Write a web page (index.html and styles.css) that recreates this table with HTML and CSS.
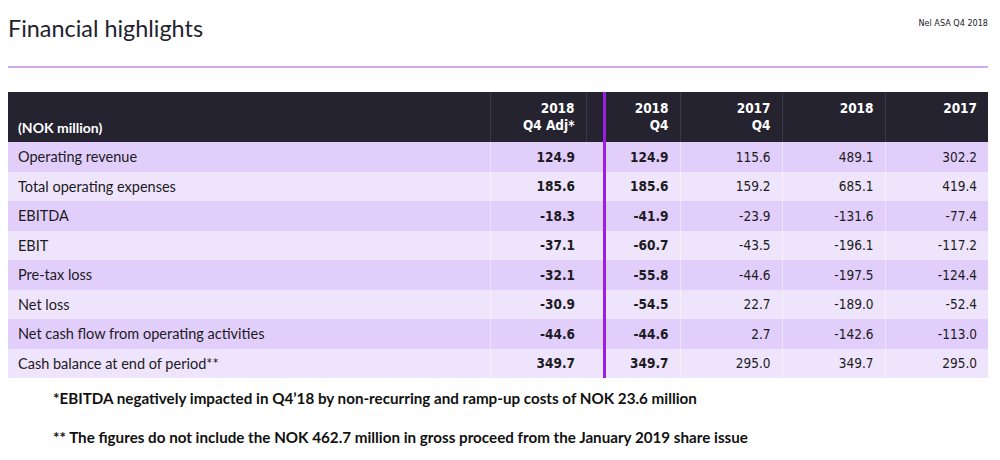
FILE: index.html
```html
<!DOCTYPE html>
<html>
<head>
<meta charset="utf-8">
<link rel="stylesheet" href="styles.css">
</head>
<body>
<div class="page">
  <header class="top">
    <h1 class="title">Financial highlights</h1>
    <div class="tag">Nel ASA Q4 2018</div>
  </header>
  <div class="rule"></div>
  <table class="fin">
    <colgroup>
      <col class="c-label"><col class="c-adj"><col class="c-gap"><col class="c-q4"><col class="c-q4b"><col class="c-y"><col class="c-y">
    </colgroup>
    <thead>
      <tr>
        <th class="label">(NOK million)</th>
        <th class="num">2018<br>Q4 Adj*</th>
        <th class="gap"></th>
        <th class="num mark">2018<br>Q4</th>
        <th class="num">2017<br>Q4</th>
        <th class="num">2018<br>&nbsp;</th>
        <th class="num">2017<br>&nbsp;</th>
      </tr>
    </thead>
    <tbody>
      <tr><td class="label">Operating revenue</td><td class="num b">124.9</td><td class="gap"></td><td class="num b mark">124.9</td><td class="num">115.6</td><td class="num">489.1</td><td class="num">302.2</td></tr>
      <tr><td class="label">Total operating expenses</td><td class="num b">185.6</td><td class="gap"></td><td class="num b mark">185.6</td><td class="num">159.2</td><td class="num">685.1</td><td class="num">419.4</td></tr>
      <tr><td class="label">EBITDA</td><td class="num b">-18.3</td><td class="gap"></td><td class="num b mark">-41.9</td><td class="num">-23.9</td><td class="num">-131.6</td><td class="num">-77.4</td></tr>
      <tr><td class="label">EBIT</td><td class="num b">-37.1</td><td class="gap"></td><td class="num b mark">-60.7</td><td class="num">-43.5</td><td class="num">-196.1</td><td class="num">-117.2</td></tr>
      <tr><td class="label">Pre-tax loss</td><td class="num b">-32.1</td><td class="gap"></td><td class="num b mark">-55.8</td><td class="num">-44.6</td><td class="num">-197.5</td><td class="num">-124.4</td></tr>
      <tr><td class="label">Net loss</td><td class="num b">-30.9</td><td class="gap"></td><td class="num b mark">-54.5</td><td class="num">22.7</td><td class="num">-189.0</td><td class="num">-52.4</td></tr>
      <tr><td class="label">Net cash flow from operating activities</td><td class="num b">-44.6</td><td class="gap"></td><td class="num b mark">-44.6</td><td class="num">2.7</td><td class="num">-142.6</td><td class="num">-113.0</td></tr>
      <tr><td class="label">Cash balance at end of period**</td><td class="num b">349.7</td><td class="gap"></td><td class="num b mark">349.7</td><td class="num">295.0</td><td class="num">349.7</td><td class="num">295.0</td></tr>
    </tbody>
  </table>
  <div class="notes">
    <p>*EBITDA negatively impacted in Q4’18 by non-recurring and ramp-up costs of NOK 23.6 million</p>
    <p>** The figures do not include the NOK 462.7 million in gross proceed from the January 2019 share issue</p>
  </div>
</div>
</body>
</html>
```
FILE: styles.css
```css
html, body {
  margin: 0;
  padding: 0;
  background: #ffffff;
}
.page {
  width: 980px;
  margin-left: 8px;
  color: #1c1b22;
}
.top {
  display: flex;
  justify-content: space-between;
  align-items: flex-start;
  height: 66px;
}
.title {
  margin: 14px 0 0 0;
  font-family: "Lato", "Liberation Sans", sans-serif;
  font-weight: 400;
  font-size: 23.4px;
  line-height: 28px;
  color: #23222e;
}
.tag {
  margin-top: 18px;
  font-family: "DejaVu Sans Condensed", "DejaVu Sans", sans-serif;
  font-size: 9px;
  line-height: 11px;
  color: #222;
}
.rule {
  height: 2px;
  background: #cfa8ee;
}
.fin {
  margin-top: 24px;
  width: 980px;
  border-collapse: collapse;
  table-layout: fixed;
}
.c-label { width: 482px; }
.c-adj { width: 96px; }
.c-gap { width: 18px; }
.c-q4 { width: 76px; }
.c-q4b { width: 102px; }
.c-y { width: 103px; }
.fin th {
  background: #24232f;
  color: #ffffff;
  height: 42px;
  padding: 0;
  vertical-align: top;
  border-left: 1px solid #3b3a47;
}
.fin th:first-child { border-left: none; }
.fin th.num {
  font-family: "DejaVu Sans Condensed", "DejaVu Sans", sans-serif;
  font-weight: 700;
  font-size: 13.5px;
  line-height: 17px;
  text-align: right;
  padding: 8px 11px 0 0;
}
.fin th.label {
  font-family: "Lato", "Liberation Sans", sans-serif;
  font-weight: 700;
  font-size: 14px;
  text-align: left;
  vertical-align: bottom;
  padding: 0 0 6px 10px;
}
.fin td {
  height: 29.5px;
  padding: 0;
  border-left: 1px solid rgba(255,255,255,0.45);
}
.fin td:first-child { border-left: none; }
.fin tbody tr:nth-child(odd) td { background: #e1cefb; }
.fin tbody tr:nth-child(even) td { background: #eee4fc; }
.fin td.label {
  font-family: "Lato", "Liberation Sans", sans-serif;
  font-size: 14.5px;
  padding-left: 10px;
  color: #1c1b22;
}
.fin td.num {
  font-family: "DejaVu Sans Condensed", "DejaVu Sans", sans-serif;
  font-size: 13.5px;
  text-align: right;
  padding-right: 11px;
  color: #1c1b22;
}
.fin td.b { font-weight: 700; }
.fin td.gap { border-left: none; }
.fin th.gap { border-left: 1px solid #3b3a47; }
.fin .mark { border-left: 3px solid #9a1ee6 !important; }
.notes {
  padding-left: 45px;
  font-family: "Lato", "Liberation Sans", sans-serif;
  font-weight: 700;
  font-size: 15.2px;
  color: #111;
}
.notes p {
  margin: 0;
  line-height: 20px;
}
.notes p:first-child { margin-top: 10px; }
.notes p + p { margin-top: 19px; }
```
